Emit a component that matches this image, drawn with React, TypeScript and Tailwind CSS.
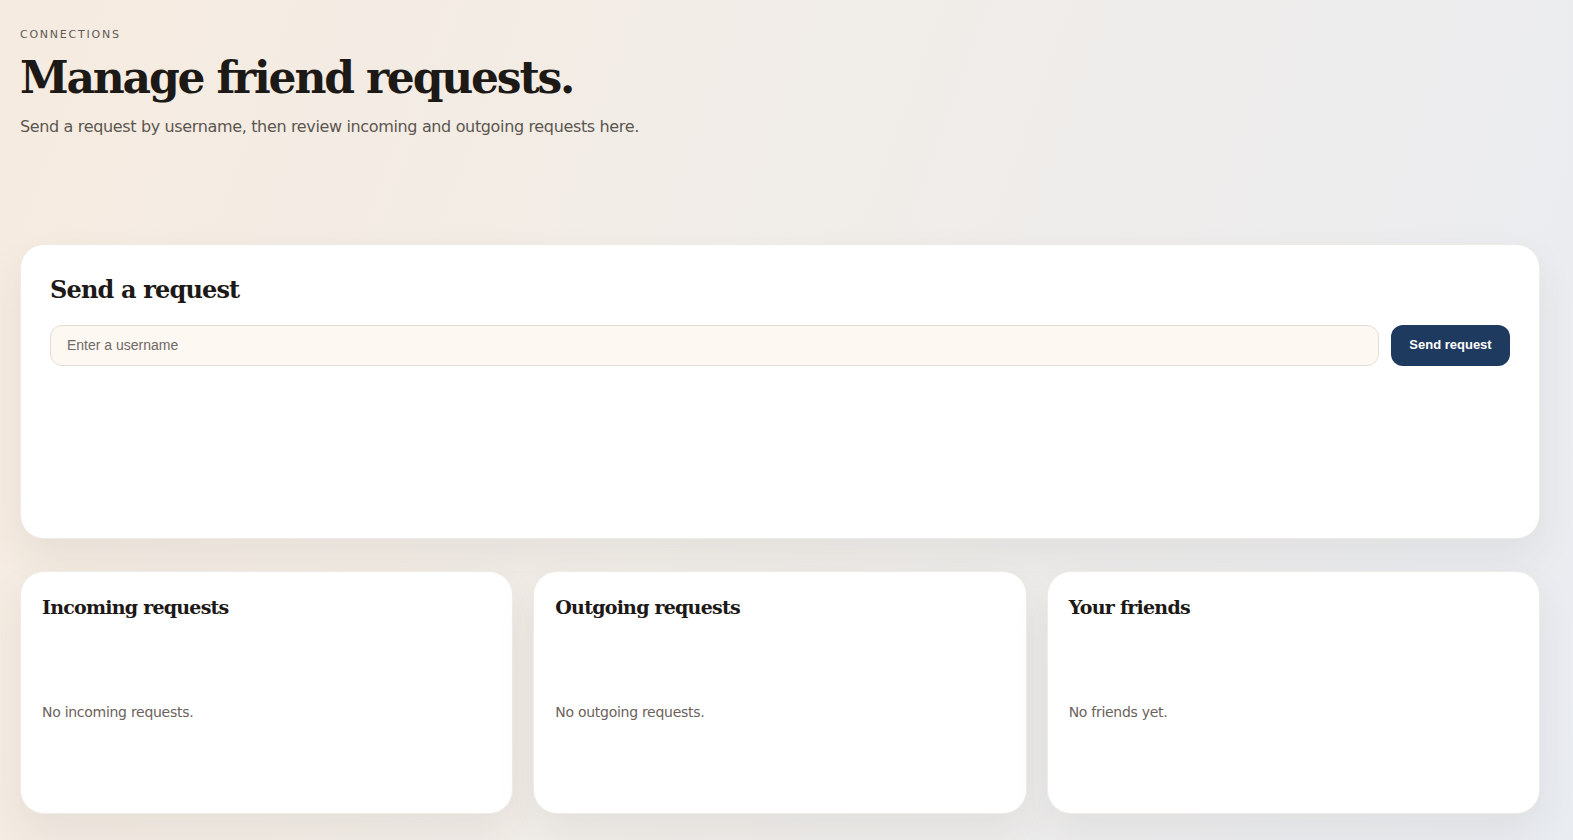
import React from 'react'

const serif = "font-['DejaVu_Serif',serif]"
const grotesk = "font-['DejaVu_Sans',sans-serif]"

interface ListCardProps {
  title: string
  empty: string
}

const ListCard: React.FC<ListCardProps> = ({ title, empty }) => (
  <div className="h-[243px] rounded-3xl bg-white px-[21px] pt-[21px] shadow-[0_18px_40px_rgba(60,50,40,0.07)] border border-[#efebe6]">
    <h3 className={`${serif} text-[19px] font-bold tracking-[-0.04em] text-[#1c1916]`}>{title}</h3>
    <p className={`${grotesk} mt-[81px] text-[14px] tracking-[-0.02em] text-[#6b625c]`}>{empty}</p>
  </div>
)

export default function App() {
  return (
    <div className="min-h-[840px] w-full bg-[linear-gradient(110deg,#f6ebe0_0%,#f1ede8_45%,#e9ecf1_100%)]">
      <div className="w-[1540px] pl-5 pt-[27px]">
        {/* Header */}
        <p className={`${grotesk} text-[11px] tracking-[0.16em] text-[#5f5a55]`}>CONNECTIONS</p>
        <h1 className={`${serif} mt-[6px] text-[44px] leading-[56px] font-bold tracking-[-0.05em] text-[#1c1916]`}>
          Manage friend requests.
        </h1>
        <p className={`${grotesk} mt-[10px] text-[16px] leading-[22px] tracking-[-0.022em] text-[#5c5650]`}>
          Send a request by username, then review incoming and outgoing requests here.
        </p>

        {/* Send card */}
        <div className="mt-[106px] h-[295px] rounded-3xl bg-white px-[29px] pt-[27px] shadow-[0_18px_40px_rgba(60,50,40,0.07)] border border-[#efebe6]">
          <h2 className={`${serif} text-[24px] font-bold tracking-[-0.035em] text-[#1c1916]`}>Send a request</h2>
          <div className="mt-[17px] flex gap-3">
            <input
              placeholder="Enter a username"
              className="h-[41px] flex-1 rounded-xl border border-[#e5ddd5] bg-[#fef8f3] px-4 font-['Liberation_Sans',sans-serif] text-[14px] text-[#1c1916] placeholder:text-[#6f6a66] outline-none"
            />
            <button className="h-[41px] w-[119px] rounded-xl bg-[#1f3a5f] font-['Liberation_Sans',sans-serif] text-[13px] font-bold text-white">
              Send request
            </button>
          </div>
        </div>

        {/* Lists */}
        <div className="mt-[32px] grid grid-cols-3 gap-5">
          <ListCard title="Incoming requests" empty="No incoming requests." />
          <ListCard title="Outgoing requests" empty="No outgoing requests." />
          <ListCard title="Your friends" empty="No friends yet." />
        </div>
      </div>
    </div>
  )
}
